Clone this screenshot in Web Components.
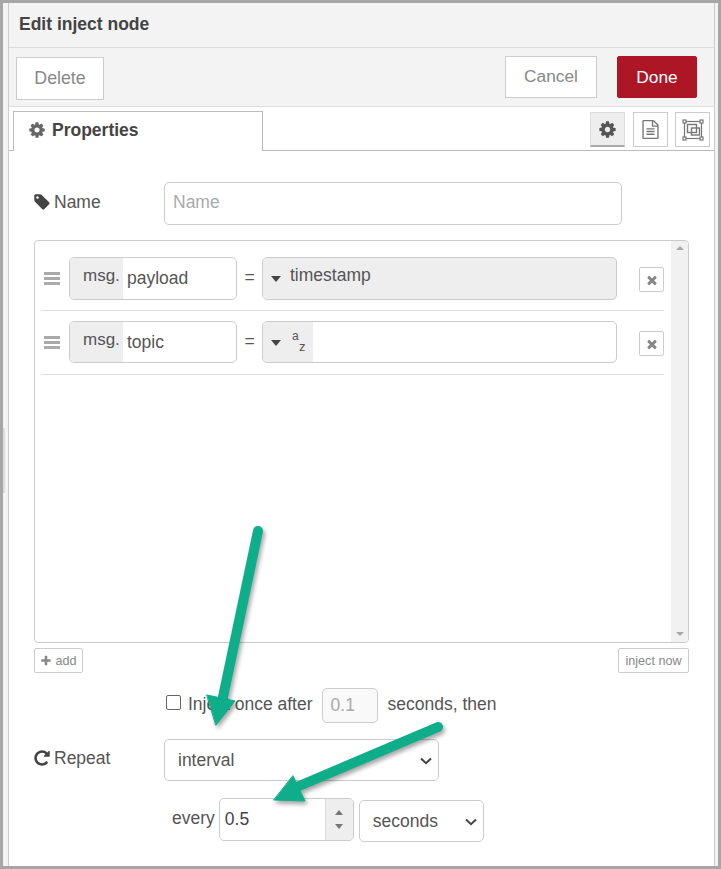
<!DOCTYPE html>
<html><head><meta charset="utf-8">
<style>
html,body{margin:0;padding:0;background:#fff}
body{font-family:"Liberation Sans",Arial,sans-serif;color:#555;width:721px;height:869px;overflow:hidden;position:relative}
</style></head><body>
<template id="t-frame"><style>
:host{display:flex;box-sizing:border-box;width:721px;height:869px;border:3px solid #a6a6a6;background:#f3f3f3;padding:0 3px 0 5px;position:relative}
.tray{flex:1;min-width:0;background:#fff;border-left:1px solid #ccc;border-right:1px solid #ccc;display:flex;flex-direction:column;overflow:hidden}
.grip{position:absolute;left:0;top:425px;width:2px;height:65px;background:#dcdcdc}
</style><div class="grip"></div><div class="tray"><slot></slot></div></template>

<template id="t-header"><style>
:host{display:block;height:44px;box-sizing:content-box;background:#f3f3f3;border-bottom:1px solid #ddd}
div{padding:11px 0 0 10px;font:bold 17.5px/20px "Liberation Sans",Arial,sans-serif;color:#444}
</style><div><slot></slot></div></template>

<template id="t-toolbar"><style>
:host{display:flex;align-items:flex-start;background:#f3f3f3;border-bottom:1px solid #ddd;padding:8px 17px 0 7px;box-sizing:content-box;height:50px}
.sp{flex:1}
::slotted(nr-btn){flex:none}
</style><slot name="left"></slot><div class="sp"></div><slot name="right"></slot></template>

<template id="t-btn"><style>
:host{display:flex;align-items:center;justify-content:center;box-sizing:border-box;background:#fff;border:1px solid #ccc;color:#888;font:17.3px/20px "Liberation Sans",Arial,sans-serif}
:host([primary]){background:#ad1625;border-color:#ad1625;color:#fff;border-radius:2px}
:host([small]){font-size:12.6px;border-radius:2px;color:#888}
:host([big]){font-size:17.8px;padding-bottom:2px}
:host([raised]){padding-bottom:2px}
</style><slot></slot></template>

<template id="t-tabs"><style>
:host{display:flex;height:43px;box-sizing:content-box;position:relative;border-bottom:1px solid #bbb;background:#fff;padding:0 4px 0 4px}
.tab{box-sizing:border-box;width:250px;height:40px;margin-top:4px;border:1px solid #bbb;border-bottom:0;background:#fff;display:flex;align-items:center;padding:0 0 3px 14px;font:bold 17.5px/20px "Liberation Sans",Arial,sans-serif;color:#444;gap:6px}
.tab svg{width:18px;height:18px;fill:#666}
.sp{flex:1}
.btns{display:flex;gap:8px;margin-top:5px}
.b{box-sizing:border-box;width:35px;height:35px;border:1px solid #ccc;background:#fff;display:flex;align-items:center;justify-content:center}
.b:last-child{margin-left:-1px}
.b.on{background:#eee;border:1px solid #ddd;border-bottom:2px solid #aaa}
.b svg{width:19px;height:19px}
</style><div class="tab"><svg viewBox="0 0 1792 1792"><path d="M1152 896q0-106-75-181t-181-75-181 75-75 181 75 181 181 75 181-75 75-181zm512-109v222q0 12-8 23t-20 13l-185 28q-19 54-39 91 35 50 107 138 10 12 10 25t-9 23q-27 37-99 108t-94 71q-12 0-26-9l-138-108q-44 23-91 38-16 136-29 186-7 28-36 28h-222q-14 0-24.500-8.500t-11.500-21.500l-28-184q-49-16-90-37l-141 107q-10 9-25 9-14 0-25-11-126-114-165-168-7-10-7-23 0-12 8-23 15-21 51-66.500t54-70.500q-27-50-41-99l-183-27q-13-2-21-12.500t-8-23.500v-222q0-12 8-23t19-13l186-28q14-46 39-92-40-57-107-138-10-12-10-24 0-10 9-23 26-36 98.500-107.500t94.500-71.500q13 0 26 10l138 107q44-23 91-38 16-136 29-186 7-28 36-28h222q14 0 24.500 8.500t11.500 21.500l28 184q49 16 90 37l142-107q9-9 24-9 13 0 25 10 129 119 165 170 7 8 7 22 0 12-8 23-15 21-51 66.500t-54 70.500q26 50 41 98l183 28q13 2 21 12.500t8 23.500z"/></svg><slot></slot></div><div class="sp"></div>
<div class="btns">
<div class="b on"><svg viewBox="0 0 1792 1792" fill="#555"><path d="M1152 896q0-106-75-181t-181-75-181 75-75 181 75 181 181 75 181-75 75-181zm512-109v222q0 12-8 23t-20 13l-185 28q-19 54-39 91 35 50 107 138 10 12 10 25t-9 23q-27 37-99 108t-94 71q-12 0-26-9l-138-108q-44 23-91 38-16 136-29 186-7 28-36 28h-222q-14 0-24.500-8.500t-11.500-21.500l-28-184q-49-16-90-37l-141 107q-10 9-25 9-14 0-25-11-126-114-165-168-7-10-7-23 0-12 8-23 15-21 51-66.500t54-70.500q-27-50-41-99l-183-27q-13-2-21-12.500t-8-23.500v-222q0-12 8-23t19-13l186-28q14-46 39-92-40-57-107-138-10-12-10-24 0-10 9-23 26-36 98.500-107.500t94.500-71.500q13 0 26 10l138 107q44-23 91-38 16-136 29-186 7-28 36-28h222q14 0 24.500 8.500t11.500 21.500l28 184q49 16 90 37l142-107q9-9 24-9 13 0 25 10 129 119 165 170 7 8 7 22 0 12-8 23-15 21-51 66.500t-54 70.500q26 50 41 98l183 28q13 2 21 12.500t8 23.500z"/></svg></div>
<div class="b"><svg viewBox="0 0 1792 1792" fill="#777"><path d="M1596 380q28 28 48 76t20 88v1152q0 40-28 68t-68 28h-1344q-40 0-68-28t-28-68v-1600q0-40 28-68t68-28h896q40 0 88 20t76 48zm-444-244v376h376q-10-29-22-41l-313-313q-12-12-41-22zm384 1528v-1024h-416q-40 0-68-28t-28-68v-416h-768v1536h1280zm-1024-864q0-14 9-23t23-9h704q14 0 23 9t9 23v64q0 14-9 23t-23 9h-704q-14 0-23-9t-9-23v-64zm736 224q14 0 23 9t9 23v64q0 14-9 23t-23 9h-704q-14 0-23-9t-9-23v-64q0-14 9-23t23-9h704zm0 256q14 0 23 9t9 23v64q0 14-9 23t-23 9h-704q-14 0-23-9t-9-23v-64q0-14 9-23t23-9h704z"/></svg></div>
<div class="b"><svg viewBox="0 0 22 22" style="width:22px;height:22px" fill="none" stroke="#777"><rect x="2.500" y="2.500" width="17" height="17" stroke-width="1.200"/><rect x="5.500" y="5.500" width="9" height="8" stroke-width="1.400"/><rect x="9.500" y="9" width="8" height="7" stroke-width="1.400"/><g fill="#fff" stroke-width="1.200"><rect x="1" y="1" width="3" height="3"/><rect x="18" y="1" width="3" height="3"/><rect x="1" y="18" width="3" height="3"/><rect x="18" y="18" width="3" height="3"/></g></svg></div>
</div></template>

<template id="t-form"><style>
:host{display:block;padding:31px 25px 0 25px;flex:1;font:17.5px/20px "Liberation Sans",Arial,sans-serif;color:#555}
</style><slot></slot></template>

<template id="t-row"><style>
:host{display:flex;align-items:center;font:17.5px/20px "Liberation Sans",Arial,sans-serif;color:#555}
.l{width:130px;flex:none;display:flex;align-items:center;gap:3px;margin-top:-3px;margin-left:-1px;padding-right:1px;box-sizing:content-box}
.l ::slotted(svg){width:18px;height:18px;fill:#444;flex:none}
:host([up]) .l{margin-top:-5px}
</style><div class="l" style="width:130px"><slot name="icon"></slot><slot name="label"></slot></div><slot></slot></template>

<template id="t-field"><style>
:host{display:flex;align-items:center;box-sizing:border-box;background:#fff;border:1px solid #ccc;border-radius:5px;color:#555;font:17.5px/20px "Liberation Sans",Arial,sans-serif;padding:0 8px;flex:none;position:relative;overflow:hidden}
:host([placeholder]){color:#aaa;padding-bottom:3px}
:host([disabled]){background:#f9f9f9;color:#aaa;padding-bottom:1px}
:host([select]){padding-left:13px;justify-content:space-between}
svg{width:12px;height:8px;fill:none;stroke:#444;stroke-width:2;position:absolute;right:6px;top:50%;margin-top:-3px;display:none}
:host([select]) svg{display:block}
</style><slot></slot><svg viewBox="0 0 12 8"><path d="M1 1.500 6 6.200 11 1.500"/></svg></template>

<template id="t-list"><style>
:host{display:flex;box-sizing:border-box;height:403px;border:1px solid #ccc;border-radius:4px;background:#fff;margin-top:15px;overflow:hidden}
.c{flex:1;min-width:0;padding-top:16px}
.sb{width:17px;background:#f1f1f1;display:flex;flex-direction:column;justify-content:space-between;align-items:center;padding:5px 0 6px}
.sb i{width:0;height:0;border-left:4px solid transparent;border-right:4px solid transparent}
.u{border-bottom:4px solid #a8a8a8}.d{border-top:4px solid #a8a8a8}
</style><div class="c"><slot></slot></div><div class="sb"><i class="u"></i><i class="d"></i></div></template>

<template id="t-item"><style>
:host{display:flex;align-items:flex-start;box-sizing:border-box;margin-left:6px;margin-right:7px;padding-left:3px;height:54px;border-bottom:1px solid #ddd;font:17.5px/20px "Liberation Sans",Arial,sans-serif;color:#555}
:host(:not(:first-child)){padding-top:10px;height:64px}
.h{width:16px;flex:none;margin-top:15px;margin-right:9px;height:13px;background:repeating-linear-gradient(#a9a9a9 0 2.600px,transparent 2.600px 5px)}
.m{box-sizing:border-box;width:168px;height:var(--h,43px);border:1px solid #ccc;border-radius:5px;display:flex;overflow:hidden;flex:none}
.p{width:53px;background:#eee;box-sizing:border-box;padding:8px 0 0 13px;flex:none;font-size:17px}
.v{padding:10px 0 0 4px}
.e{width:25px;text-align:center;flex:none;padding-top:10px}
.x{box-sizing:border-box;width:25px;height:25px;border:1px solid #ccc;border-radius:2px;margin:10px 0 0 22px;display:flex;align-items:center;justify-content:center;flex:none}
.x svg{width:14px;height:14px;fill:#888}
.t{box-sizing:border-box;width:355px;height:var(--h,43px);border:1px solid #ccc;border-radius:5px;display:flex;overflow:hidden;flex:none;background:#fff}
.t.f{background:#eee}
.s{display:flex;padding:0 0 0 8px;background:#eee;align-items:flex-start;flex:none}
.s i{width:0;height:0;border-left:5.500px solid transparent;border-right:5.500px solid transparent;border-top:6px solid #444;margin:18px 0 0 0}
.lbl{padding:7px 0 0 9px}
.lbl[hidden],.az[hidden]{display:none}
.az{position:relative;width:21px;height:36px;font-size:12px;line-height:12px;margin-left:11px;display:block}
.az b{font-weight:400;position:absolute;left:0;top:8px}.az b+b{left:7px;top:19px;font-size:13px}
</style>
<div class="h"></div><div class="m"><div class="p">msg.</div><div class="v"><slot name="prop"></slot></div></div><div class="e">=</div>
<div class="t" id="t"><div class="s"><i></i><span id="a" class="az" hidden><b>a</b><b>z</b></span><span id="l" class="lbl"><slot name="type"></slot></span></div></div>
<div class="x"><svg viewBox="0 0 1792 1792"><path d="M1490 1322q0 40-28 68l-136 136q-28 28-68 28t-68-28l-294-294-294 294q-28 28-68 28t-68-28l-136-136q-28-28-28-68t28-68l294-294-294-294q-28-28-28-68t28-68l136-136q28-28 68-28t68 28l294 294 294-294q28-28 68-28t68 28l136 136q28 28 28 68t-28 68l-294 294 294 294q28 28 28 68z"/></svg></div></template>

<template id="t-arrows"><style>
:host{display:block;position:absolute;left:0;top:0;width:721px;height:869px;pointer-events:none}
svg{display:block;filter:drop-shadow(2px 3px 2px rgba(0,0,0,.35))}
</style><svg width="721" height="869" viewBox="0 0 721 869"><g fill="#0eae8b" stroke="#0eae8b" stroke-linecap="round" stroke-linejoin="round">
<path d="M258 531 223 697" stroke-width="10" fill="none"/><path d="M207 695 235 701 216 725Z" stroke-width="1"/>
<path d="M438 727 292 789" stroke-width="10" fill="none"/><path d="M293 776 305 801 274 800Z" stroke-width="1"/>
</g></svg></template>

<nr-frame>
 <nr-header>Edit inject node</nr-header>
 <nr-toolbar>
  <nr-btn slot="left" big style="width:88px;height:43px;margin-top:1px">Delete</nr-btn>
  <div slot="right" style="display:flex;gap:20px">
   <nr-btn raised style="width:92px;height:42px">Cancel</nr-btn>
   <nr-btn primary style="width:80px;height:42px">Done</nr-btn>
  </div>
 </nr-toolbar>
 <nr-tabs>Properties</nr-tabs>
 <nr-form>
  <nr-row>
   <svg slot="icon" viewBox="0 0 1792 1792"><path d="M576 448q0-53-37.500-90.500t-90.500-37.500-90.500 37.500-37.500 90.500 37.500 90.500 90.500 37.500 90.500-37.500 37.500-90.500zm1067 576q0 53-37 90l-491 492q-39 37-91 37-53 0-90-37l-715-716q-38-37-64.500-101t-26.500-117v-416q0-52 38-90t90-38h416q53 0 117 26.500t102 64.500l715 714q37 39 37 91z"/></svg>
   <span slot="label">Name</span>
   <nr-field placeholder style="width:458px;height:43px">Name</nr-field>
  </nr-row>
  <nr-list>
   <nr-item><span slot="prop">payload</span><span slot="type">timestamp</span></nr-item>
   <nr-item az style="--h:42px"><span slot="prop">topic</span></nr-item>
  </nr-list>
  <div style="display:flex;justify-content:space-between;margin-top:5px">
   <nr-btn small style="width:49px;height:25px;gap:3px"><svg viewBox="0 0 1792 1792" width="12" height="12" fill="#888"><path d="M1600 736v192q0 40-28 68t-68 28h-416v416q0 40-28 68t-68 28h-192q-40 0-68-28t-28-68v-416h-416q-40 0-68-28t-28-68v-192q0-40 28-68t68-28h416v-416q0-40 28-68t68-28h192q40 0 68 28t28 68v416h416q40 0 68 28t28 68z"/></svg>add</nr-btn>
   <nr-btn small style="width:71px;height:25px">inject now</nr-btn>
  </div>
  <div style="display:flex;align-items:center;margin:15px 0 0 132px;height:35px">
   <span style="box-sizing:border-box;width:15px;height:15px;border:1px solid #666;border-radius:2px;background:#fff;margin:-6px 7px 0 0;flex:none"></span>
   <span style="padding-bottom:4px">Inject once after</span>
   <nr-field disabled style="width:56px;height:35px;margin:0 10px 0 9px">0.1</nr-field>
   <span style="padding-bottom:4px">seconds, then</span>
  </div>
  <nr-row up style="margin-top:16px">
   <svg slot="icon" viewBox="0 0 1792 1792"><path d="M1664 256v448q0 26-19 45t-45 19h-448q-42 0-59-40-17-39 14-69l138-138q-148-137-349-137-104 0-198.500 40.500t-163.500 109.500-109.500 163.500-40.500 198.500 40.500 198.500 109.500 163.500 163.500 109.500 198.500 40.500q119 0 225-52t179-147q7-10 23-12 15 0 25 9l137 138q9 8 9.500 20.500t-7.500 22.500q-109 132-264 204.500t-327 72.500q-156 0-298-61t-245-164-164-245-61-298 61-298 164-245 245-164 298-61q147 0 284.500 55.500t244.500 156.500l130-129q29-31 70-14 39 17 39 59z"/></svg>
   <span slot="label">Repeat</span>
   <nr-field select style="width:275px;height:42px">interval</nr-field>
  </nr-row>
  <div style="display:flex;align-items:flex-start;margin:17px 0 0 138px">
   <span style="margin:10px 4px 0 0">every</span>
   <nr-field style="width:135px;height:43px;padding-left:5px;padding-bottom:2px;color:#444">0.5
    <span style="position:absolute;right:0;top:0;bottom:0;width:28px;background:#eee;border-left:1px solid #ddd;display:flex;flex-direction:column;align-items:center;justify-content:space-between;padding:11px 0 11px;box-sizing:border-box"><i style="width:0;height:0;border:4.500px solid transparent;border-top:0;border-bottom:5px solid #777"></i><i style="width:0;height:0;border:4.500px solid transparent;border-bottom:0;border-top:5px solid #777"></i></span>
   </nr-field>
   <nr-field select style="width:125px;height:42px;margin:2px 0 0 5px">seconds</nr-field>
  </div>
 </nr-form>
</nr-frame>
<nr-arrows></nr-arrows>
<script>
function def(name,tpl,init){customElements.define(name,class extends HTMLElement{
  constructor(){super();this.attachShadow({mode:'open'}).appendChild(document.getElementById(tpl).content.cloneNode(true));}
  connectedCallback(){if(init)init(this);}
});}
def('nr-frame','t-frame');def('nr-header','t-header');def('nr-toolbar','t-toolbar');def('nr-btn','t-btn');
def('nr-tabs','t-tabs');def('nr-form','t-form');def('nr-row','t-row');def('nr-field','t-field');def('nr-list','t-list');
def('nr-arrows','t-arrows');
def('nr-item','t-item',el=>{const s=el.shadowRoot;if(el.hasAttribute('az')){s.getElementById('a').hidden=false;s.getElementById('l').hidden=true;}else{s.getElementById('t').classList.add('f');}});
</script>
</body></html>
